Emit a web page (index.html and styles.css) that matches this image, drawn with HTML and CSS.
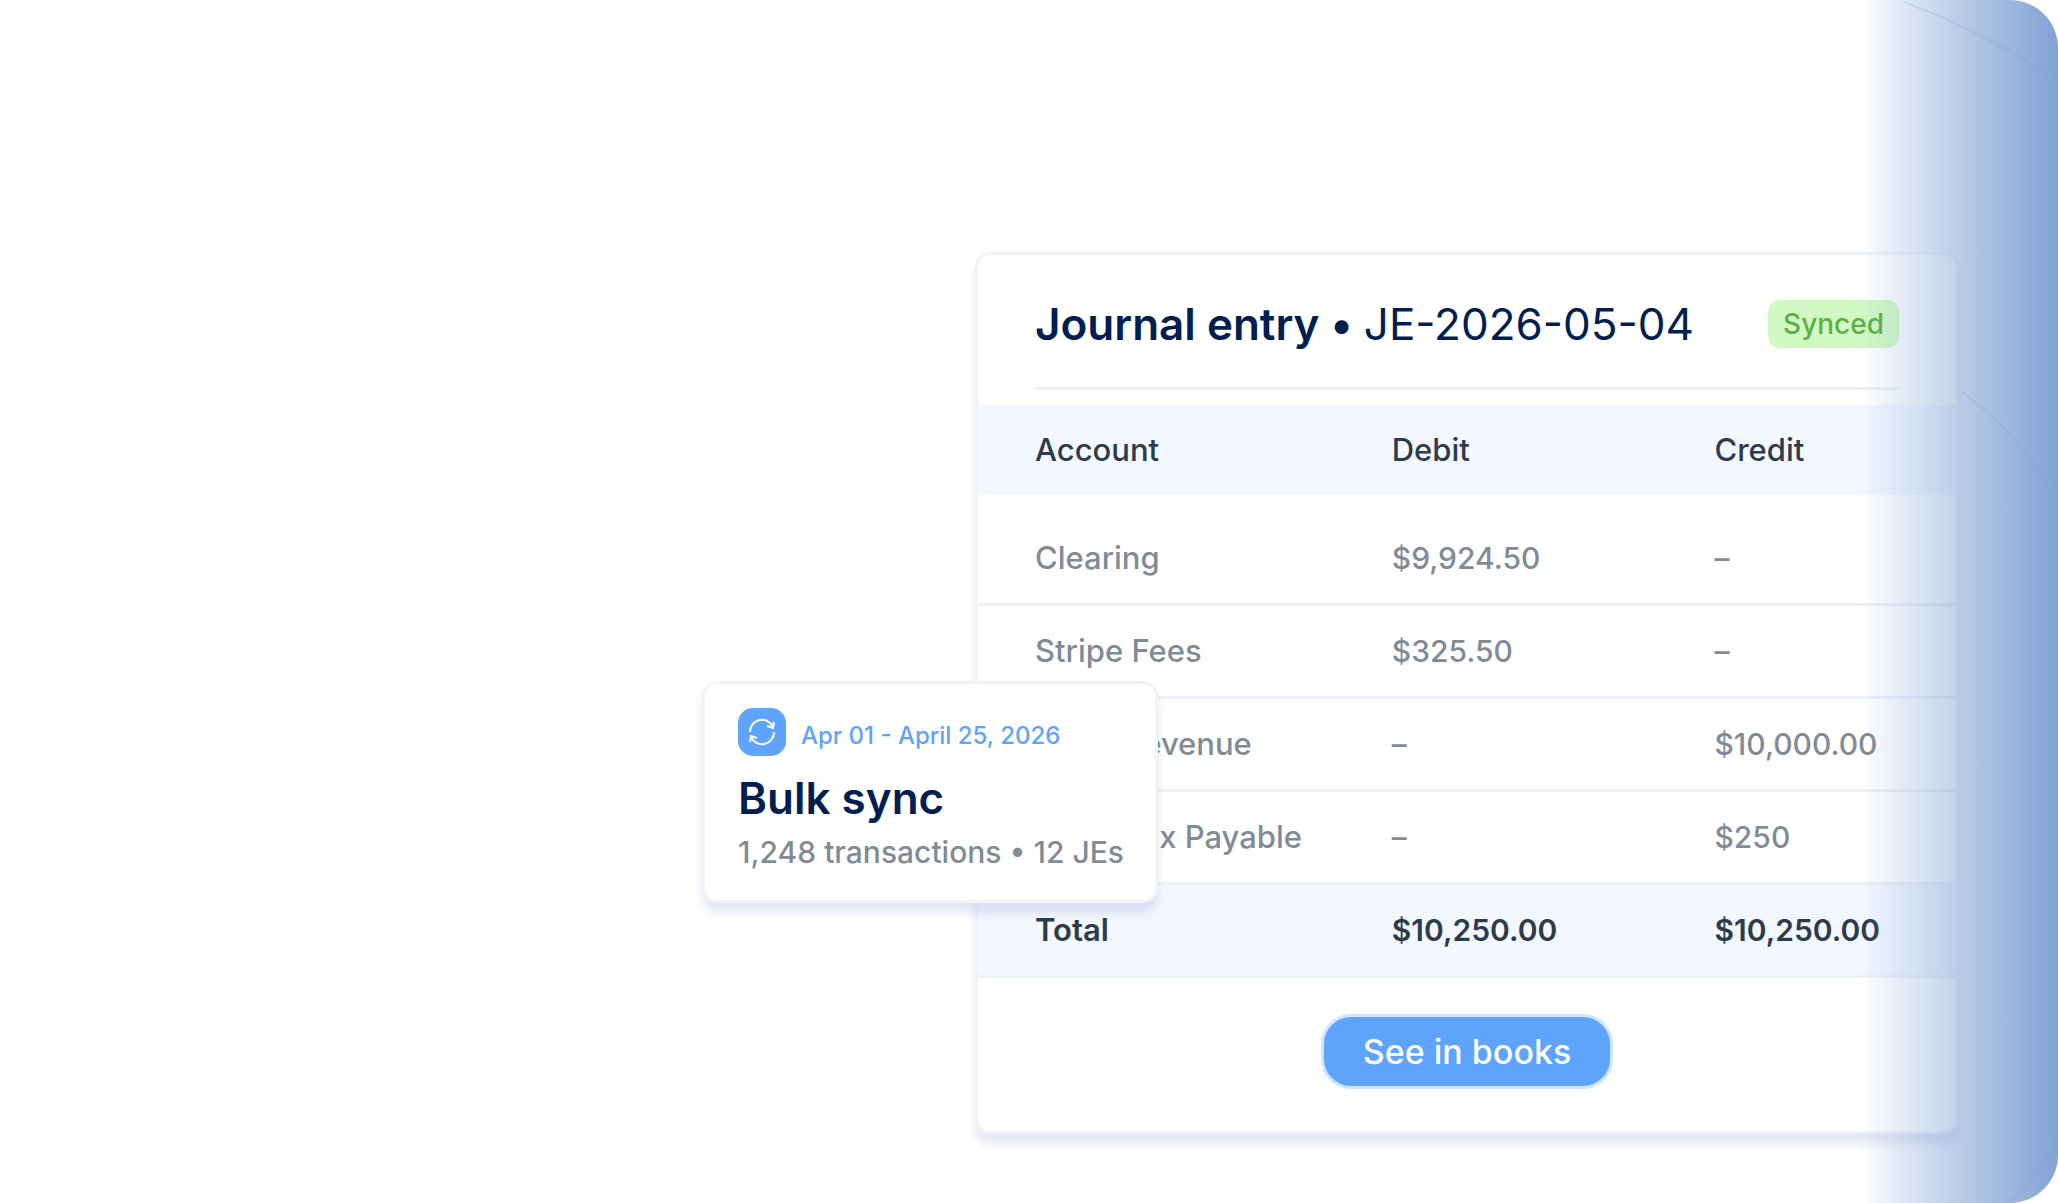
FILE: index.html
```html
<!DOCTYPE html>
<html lang="en">
  <head>
    <meta charset="UTF-8" />
    <meta name="viewport" content="width=device-width, initial-scale=1.0" />
    <title>Journal entry JE-2026-05-04</title>
    <link rel="stylesheet" href="styles.css">
  </head>
  <body>
    <main class="stage">
      <section class="card">
        <header class="card-header">
          <h1>Journal entry • <span>JE-2026-05-04</span></h1>
          <span class="badge">Synced</span>
        </header>
        <table class="entries">
          <thead>
            <tr>
              <th class="account">Account</th>
              <th class="debit">Debit</th>
              <th>Credit</th>
            </tr>
          </thead>
          <tbody>
            <tr class="first">
              <td>Clearing</td>
              <td>$9,924.50</td>
              <td>–</td>
            </tr>
            <tr>
              <td>Stripe Fees</td>
              <td>$325.50</td>
              <td>–</td>
            </tr>
            <tr>
              <td>Sales Revenue</td>
              <td>–</td>
              <td>$10,000.00</td>
            </tr>
            <tr>
              <td>Sales Tax Payable</td>
              <td>–</td>
              <td>$250</td>
            </tr>
          </tbody>
          <tfoot>
            <tr>
              <td>Total</td>
              <td>$10,250.00</td>
              <td>$10,250.00</td>
            </tr>
          </tfoot>
        </table>
        <div class="card-footer">
          <button class="books-button" type="button">See in books</button>
        </div>

        <!-- sync summary, floats over the card -->
        <aside class="sync">
          <div class="sync-date">
            <span class="sync-icon">
              <svg width="30" height="30" viewBox="0 0 30 30" fill="none" stroke="#fff" stroke-width="2">
                <path d="M3 15A12 12 0 0 1 26 10" />
                <path d="M27 5L26 11L20 9" />
                <path d="M27 15A12 12 0 0 1 4 20" />
                <path d="M3 25L4 19L10 21" />
              </svg>
            </span>
            <span class="sync-range">Apr 01 - April 25, 2026</span>
          </div>
          <h2>Bulk sync</h2>
          <p>1,248 transactions • 12 JEs</p>
        </aside>
      </section>

      <!-- blue fade on the right edge -->
      <div class="fade">
        <svg width="198" height="1203" viewBox="0 0 198 1203" fill="none" stroke="#7f9fd0" stroke-opacity="0.2" stroke-width="2">
          <path d="M44 2Q125 32 198 80" />
          <path d="M102 392Q160 435 192 492" />
          <path d="M150 1201Q178 1176 197 1142" />
        </svg>
      </div>
    </main>
  </body>
</html>
```

FILE: styles.css
```css
* {
  box-sizing: border-box;
}

body {
  margin: 0;
  background-color: #fff;
  color: #2d3b4b;
  font-family: Inter, "Liberation Sans", sans-serif;
}

h1,
h2,
p {
  margin: 0;
}

.stage {
  position: relative;
  display: grid;
  grid-template-columns: 975fr 984fr 99fr;
  align-items: start;
  min-height: 100vh;
  padding-top: 252px;
  overflow: hidden;
  border-radius: 0 48px 48px 0;
  background: linear-gradient(to left, #e6edf8, #fff 198px);
}

.card {
  position: relative;
  grid-column: 2;
  border: 3px solid #f1f3f7;
  border-radius: 15px;
  background-color: #fff;
  box-shadow: 0 10px 10px rgba(70, 90, 180, 0.14);
}

.card-header {
  display: flex;
  align-items: center;
  justify-content: space-between;
  height: 135px;
  margin: 0 57px 15px;
  padding-top: 6px;
  border-bottom: 3px solid #edf1f7;
}

h1,
h2 {
  color: #001e50;
  font-size: 44px;
  font-weight: 600;
  line-height: 54px;
}

h1 {
  white-space: nowrap;
}

h1 span {
  font-weight: 400;
}

.badge {
  padding: 0 15px;
  border-radius: 12px;
  background-color: #d2f9c4;
  color: #5bb043;
  font-size: 28px;
  font-weight: 500;
  line-height: 48px;
}

.entries {
  width: 100%;
  table-layout: fixed;
  border-spacing: 0;
  font-size: 30px;
  line-height: 36px;
}

.entries th,
.entries td {
  height: 93px;
  padding: 0 0 0 3px;
  border-bottom: 3px solid #edf1f8;
  text-align: left;
  white-space: nowrap;
  font-weight: 500;
}

.entries th {
  height: 90px;
  border-bottom: none;
  background-color: #f3f7ff;
}

.entries .first td {
  height: 111px;
  padding-top: 18px;
}

.entries th:first-child,
.entries td:first-child {
  padding-left: 57px;
}

.entries th,
.entries td:first-child {
  font-size: 31px;
}

.account {
  width: 42%;
}

.debit {
  width: 33%;
}

.entries tbody td {
  color: #828b95;
}

.entries tfoot td {
  background-color: #f3f7ff;
  font-weight: 600;
}

.card-footer {
  display: flex;
  justify-content: center;
  padding: 36px 0 42px;
}

.books-button {
  height: 75px;
  padding: 0 39px;
  border: 3px solid #d0e5ff;
  border-radius: 30px;
  background-color: #5ea4fd;
  color: #fff;
  font-family: inherit;
  font-size: 34px;
  font-weight: 500;
  cursor: pointer;
}

.sync {
  position: absolute;
  top: 426px;
  left: -276px;
  width: 456px;
  height: 222px;
  padding: 24px 33px;
  border: 3px solid #f1f3f7;
  border-radius: 15px;
  background-color: #fff;
  box-shadow: 0 10px 10px rgba(70, 90, 180, 0.14);
  white-space: nowrap;
}

.sync-date {
  display: flex;
  align-items: center;
  gap: 15px;
  margin-bottom: 15px;
  color: #5ea4fd;
  font-size: 24px;
  font-weight: 500;
}

.sync-range {
  padding-top: 6px;
}

.sync-icon {
  display: flex;
  align-items: center;
  justify-content: center;
  width: 48px;
  height: 48px;
  border-radius: 15px;
  background-color: #5ea4fd;
}

.sync p {
  margin-top: 3px;
  color: #828b95;
  font-size: 30px;
  font-weight: 500;
  line-height: 48px;
}

.fade {
  position: absolute;
  top: 0;
  right: 0;
  bottom: 0;
  width: 198px;
  background: linear-gradient(to right, rgba(131, 163, 213, 0), #83a3d5);
  pointer-events: none;
}
```
